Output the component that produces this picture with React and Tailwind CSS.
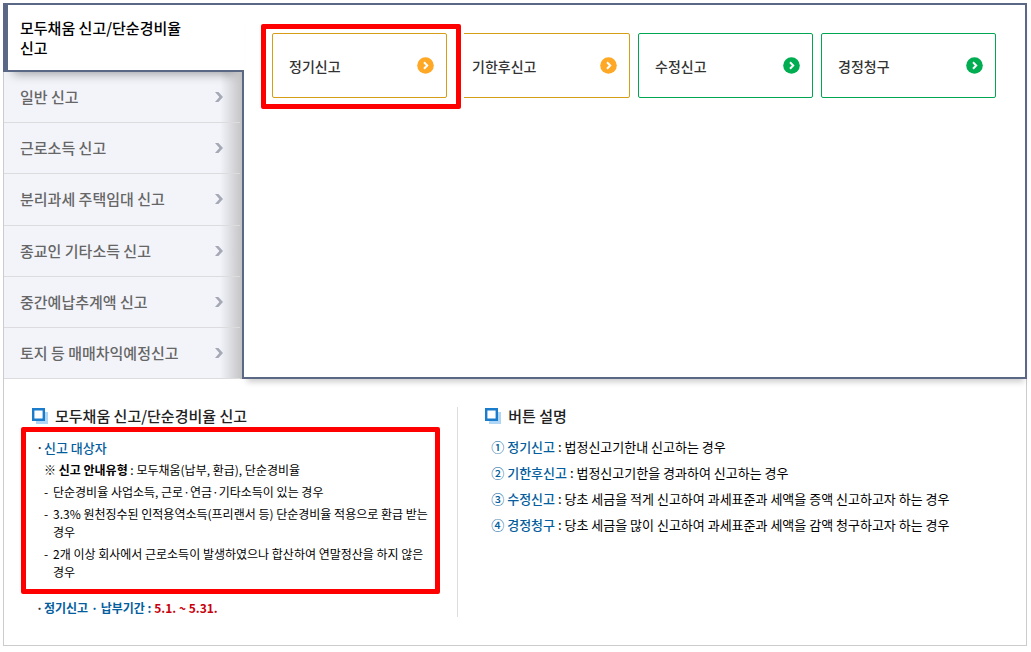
const tabs = [
  "일반 신고",
  "근로소득 신고",
  "분리과세 주택임대 신고",
  "종교인 기타소득 신고",
  "중간예납추계액 신고",
  "토지 등 매매차익예정신고"
];

const actions = [
  { name: "정기신고", tone: "amber", marked: true },
  { name: "기한후신고", tone: "amber" },
  { name: "수정신고", tone: "green" },
  { name: "경정청구", tone: "green" }
];

const toneClasses = {
  amber: { border: "border-[#d69e16]", icon: "text-[#ffa826]" },
  green: { border: "border-[#00a651]", icon: "text-[#00ad50]" }
};

const targets = [
  "단순경비율 사업소득, 근로·연금·기타소득이 있는 경우",
  "3.3% 원천징수된 인적용역소득(프리랜서 등) 단순경비율 적용으로 환급 받는 경우",
  "2개 이상 회사에서 근로소득이 발생하였으나 합산하여 연말정산을 하지 않은 경우"
];

const descriptions = [
  { no: "①", name: "정기신고", text: "법정신고기한내 신고하는 경우" },
  { no: "②", name: "기한후신고", text: "법정신고기한을 경과하여 신고하는 경우" },
  { no: "③", name: "수정신고", text: "당초 세금을 적게 신고하여 과세표준과 세액을 증액 신고하고자 하는 경우" },
  { no: "④", name: "경정청구", text: "당초 세금을 많이 신고하여 과세표준과 세액을 감액 청구하고자 하는 경우" }
];

function TabArrow() {
  return (
    <svg width="8" height="10" viewBox="0 0 8 10" className="shrink-0 text-[#a5a8b5]" aria-hidden="true">
      <path d="M0 0h3.4L8 5l-4.6 5H0l4.4-5z" fill="currentColor" />
    </svg>
  );
}

function CircleArrow({ className }) {
  return (
    <svg width="17" height="17" viewBox="0 0 17 17" className={`shrink-0 ${className}`} aria-hidden="true">
      <circle cx="8.5" cy="8.5" r="8.3" fill="currentColor" />
      <path d="M7 5.3l3.2 3.2L7 11.7" fill="none" stroke="#fff" strokeWidth="2" />
    </svg>
  );
}

function SectionTitle({ children }) {
  return (
    <h2 className="flex h-[18px] items-center gap-[7px] text-[15px] font-medium text-[#222]">
      <svg width="16" height="16" viewBox="0 0 16 16" className="shrink-0" aria-hidden="true">
        <path d="M4 4h12v12H4z" fill="#b0d6f6" />
        <path d="M1.2 1.2h10.6v10.6H1.2z" fill="#fff" stroke="#1b7ccb" strokeWidth="2.4" />
      </svg>
      {children}
    </h2>
  );
}

export default function App() {
  return (
    <main className="p-[3px] pr-1 font-['Noto_Sans_CJK_KR',sans-serif] text-black break-keep">
      <div className="flex min-h-[376px]">
        <nav className="z-10 flex w-[241px] shrink-0 flex-col">
          <button
            type="button"
            className="relative h-[69px] border-y-2 border-l-5 border-[#5a6785] bg-white pl-3 pr-12 text-left text-[15px] leading-5 font-medium shadow-[0_12px_10px_-10px_rgba(0,0,0,0.35)]"
          >
            모두채움 신고/단순경비율 신고
          </button>
          <div className="flex flex-1 flex-col border-r-2 border-l border-r-[#5a6785] border-l-[#ccc] bg-[#f3f4fa] bg-linear-to-l from-[#c4c4c6] to-[#f3f4fa] to-[22px] pr-0.5">
            {tabs.map((tab) => (
              <button
                key={tab}
                type="button"
                className="flex flex-1 items-center justify-between border-b border-[#dcdcdf] pl-4 pr-[17px] text-left text-[15px] leading-5 font-medium text-[#666]"
              >
                {tab}
                <TabArrow />
              </button>
            ))}
          </div>
        </nav>

        <section className="flex-1 border-y-2 border-r-2 border-[#5a6785] pr-[29px] pl-7 pt-7 shadow-[0_6px_6px_-3px_rgba(0,0,0,0.2)]">
          <div className="grid grid-cols-4 gap-2">
            {actions.map((action) => (
              <div key={action.name} className={action.marked ? "relative isolate z-10" : ""}>
                <button
                  type="button"
                  className={`flex h-[65px] w-full items-center justify-between rounded-xs border bg-white pl-4 pr-3 text-sm font-medium text-[#333] ${toneClasses[action.tone].border}`}
                >
                  {action.name}
                  <CircleArrow className={toneClasses[action.tone].icon} />
                </button>
                {action.marked && (
                  <div className="pointer-events-none absolute -top-[9px] -right-[14px] -bottom-[11px] -left-[11px] -z-10 rounded-xs border-5 border-[#f00] bg-white ring-3 ring-white" />
                )}
              </div>
            ))}
          </div>
        </section>
      </div>

      <div className="flex border-x border-b border-[#ccc] pt-7 pb-7">
        <section className="w-4/9 border-r border-[#ddd] px-7">
          <SectionTitle>모두채움 신고/단순경비율 신고</SectionTitle>
          <div className="relative mt-[14px] text-xs leading-[18px]">
            <div className="flex flex-col gap-1">
              <h3 className="flex text-[13px] font-medium text-[#045e9e]">
                <span className="w-3 pl-1 text-[#333]">·</span>신고 대상자
              </h3>
              <p className="pl-3">
                ※ <b>신고 안내유형</b> : 모두채움(납부, 환급), 단순경비율
              </p>
              <ul className="flex flex-col gap-1 pl-3">
                {targets.map((target) => (
                  <li key={target} className="flex">
                    <span className="w-[9px] shrink-0">-</span>
                    <span>{target}</span>
                  </li>
                ))}
              </ul>
            </div>
            <div className="pointer-events-none absolute -top-3 -right-[11px] -bottom-[13px] -left-[11px] rounded-xs border-5 border-[#f00]" />
          </div>
          <p className="mt-[18px] flex text-xs leading-[18px] font-bold text-[#045e9e]">
            <span className="w-3 pl-1 text-[#333]">·</span>
            <span>
              정기신고 · 납부기간 : <span className="text-[#c7000b]">5.1. ~ 5.31.</span>
            </span>
          </p>
        </section>

        <section className="flex-1 px-[27px]">
          <SectionTitle>버튼 설명</SectionTitle>
          <ul className="mt-3 flex flex-col gap-[6px] pl-1.5 text-[13px] leading-5">
            {descriptions.map((item) => (
              <li key={item.no}>
                <span className="font-medium text-[#045e9e]">
                  {item.no} {item.name}
                </span>{" "}
                : {item.text}
              </li>
            ))}
          </ul>
        </section>
      </div>
    </main>
  );
}
